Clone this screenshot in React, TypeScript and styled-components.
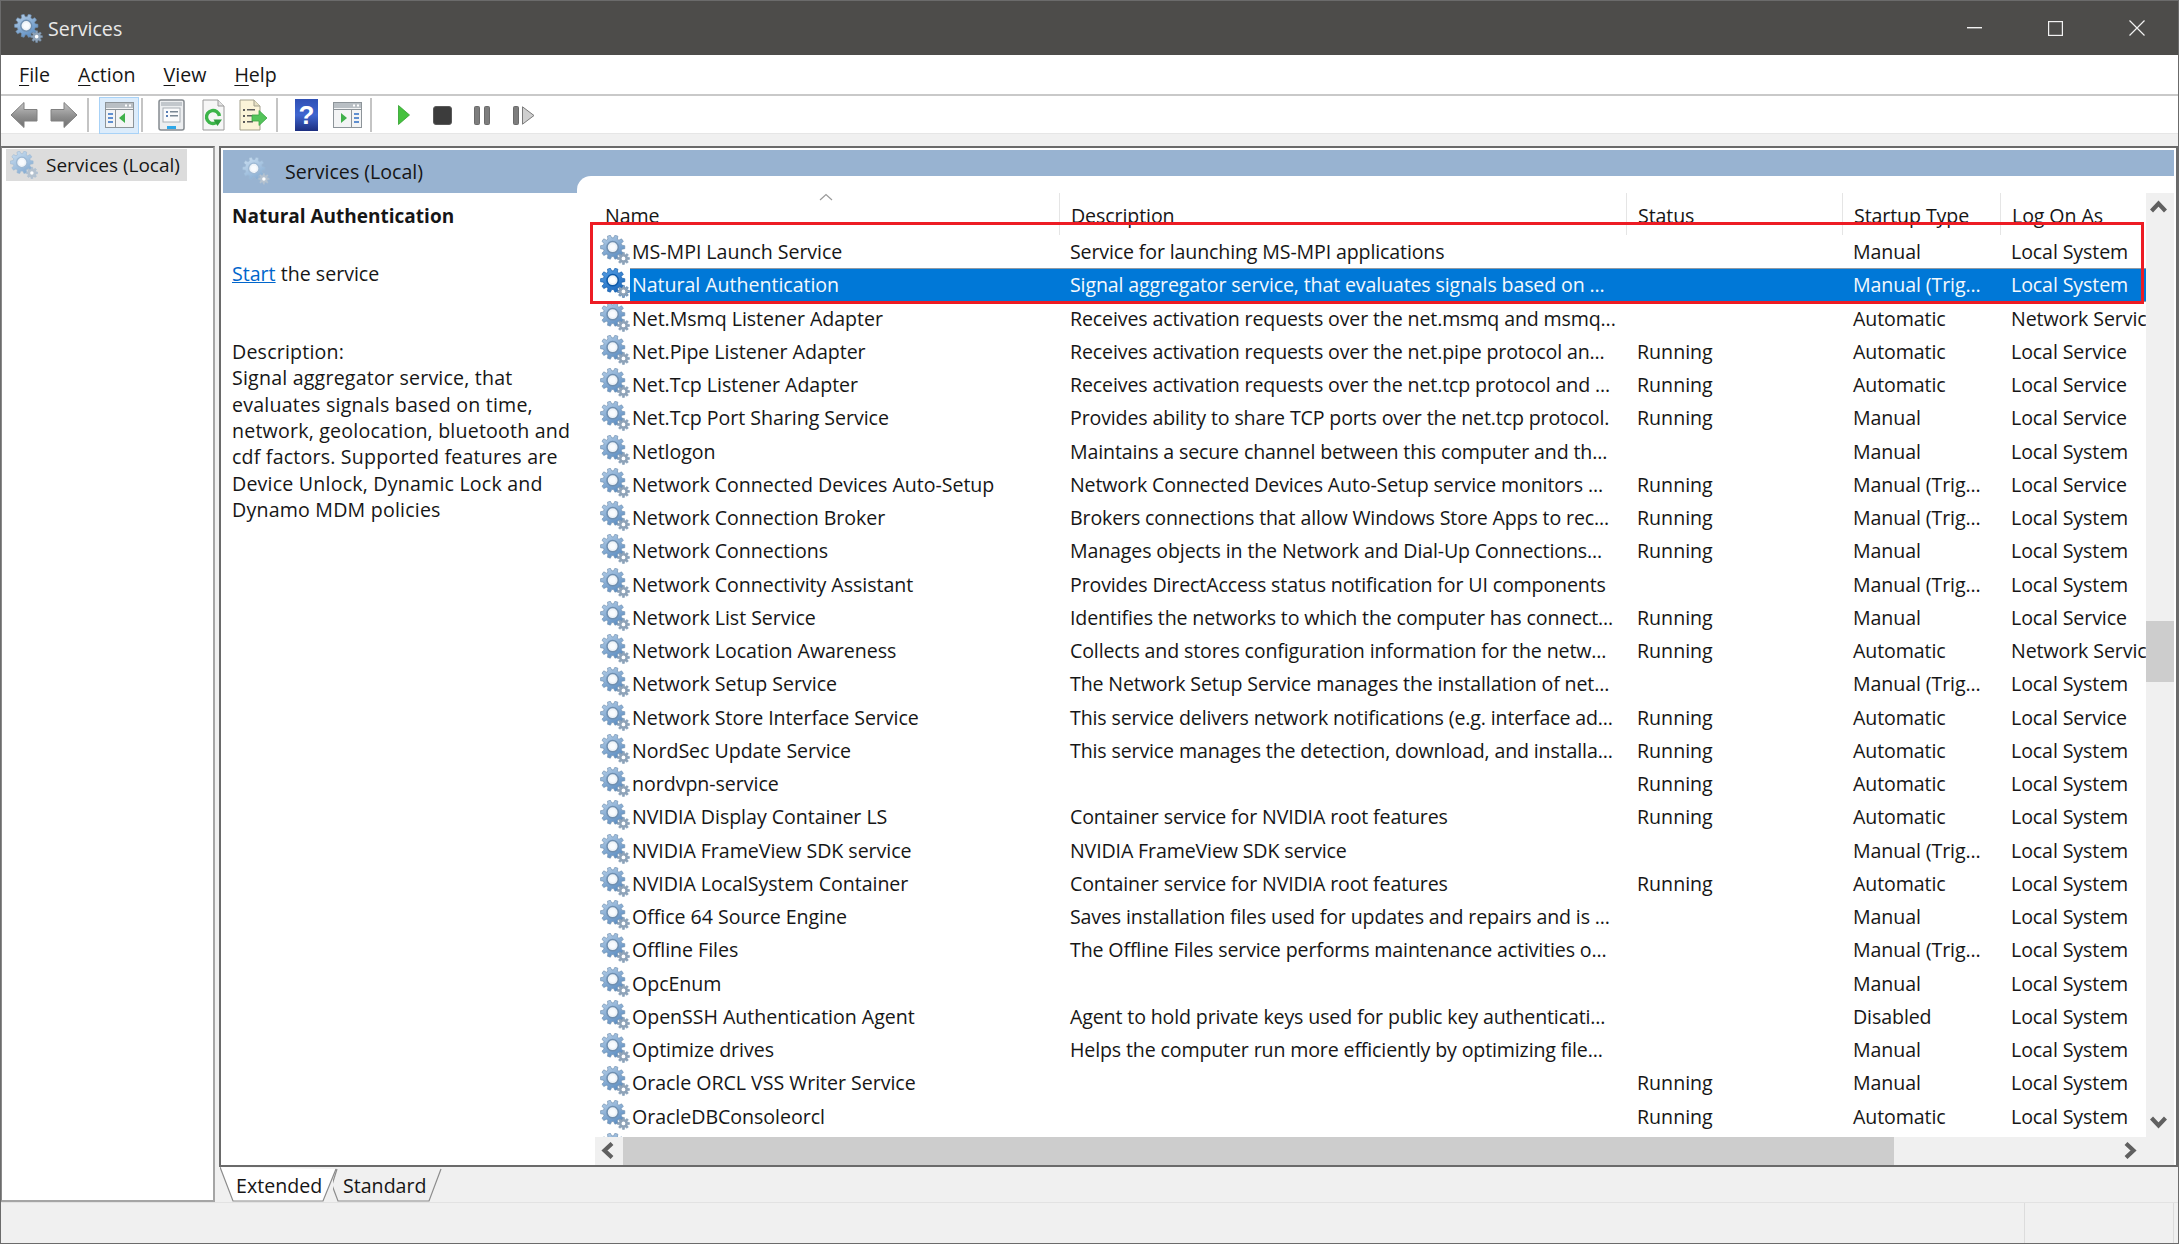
import React from "react";
import styled, { createGlobalStyle } from "styled-components";

type Service = {
  name: string;
  description?: string;
  status?: string;
  startup: string;
  logOn: string;
  selected?: boolean;
};

const services: Service[] = [
  { name: "MS-MPI Launch Service", description: "Service for launching MS-MPI applications", startup: "Manual", logOn: "Local System" },
  { name: "Natural Authentication", description: "Signal aggregator service, that evaluates signals based on ...", startup: "Manual (Trig...", logOn: "Local System", selected: true },
  { name: "Net.Msmq Listener Adapter", description: "Receives activation requests over the net.msmq and msmq...", startup: "Automatic", logOn: "Network Service" },
  { name: "Net.Pipe Listener Adapter", description: "Receives activation requests over the net.pipe protocol an...", status: "Running", startup: "Automatic", logOn: "Local Service" },
  { name: "Net.Tcp Listener Adapter", description: "Receives activation requests over the net.tcp protocol and ...", status: "Running", startup: "Automatic", logOn: "Local Service" },
  { name: "Net.Tcp Port Sharing Service", description: "Provides ability to share TCP ports over the net.tcp protocol.", status: "Running", startup: "Manual", logOn: "Local Service" },
  { name: "Netlogon", description: "Maintains a secure channel between this computer and th...", startup: "Manual", logOn: "Local System" },
  { name: "Network Connected Devices Auto-Setup", description: "Network Connected Devices Auto-Setup service monitors ...", status: "Running", startup: "Manual (Trig...", logOn: "Local Service" },
  { name: "Network Connection Broker", description: "Brokers connections that allow Windows Store Apps to rec...", status: "Running", startup: "Manual (Trig...", logOn: "Local System" },
  { name: "Network Connections", description: "Manages objects in the Network and Dial-Up Connections...", status: "Running", startup: "Manual", logOn: "Local System" },
  { name: "Network Connectivity Assistant", description: "Provides DirectAccess status notification for UI components", startup: "Manual (Trig...", logOn: "Local System" },
  { name: "Network List Service", description: "Identifies the networks to which the computer has connect...", status: "Running", startup: "Manual", logOn: "Local Service" },
  { name: "Network Location Awareness", description: "Collects and stores configuration information for the netw...", status: "Running", startup: "Automatic", logOn: "Network Service" },
  { name: "Network Setup Service", description: "The Network Setup Service manages the installation of net...", startup: "Manual (Trig...", logOn: "Local System" },
  { name: "Network Store Interface Service", description: "This service delivers network notifications (e.g. interface ad...", status: "Running", startup: "Automatic", logOn: "Local Service" },
  { name: "NordSec Update Service", description: "This service manages the detection, download, and installa...", status: "Running", startup: "Automatic", logOn: "Local System" },
  { name: "nordvpn-service", status: "Running", startup: "Automatic", logOn: "Local System" },
  { name: "NVIDIA Display Container LS", description: "Container service for NVIDIA root features", status: "Running", startup: "Automatic", logOn: "Local System" },
  { name: "NVIDIA FrameView SDK service", description: "NVIDIA FrameView SDK service", startup: "Manual (Trig...", logOn: "Local System" },
  { name: "NVIDIA LocalSystem Container", description: "Container service for NVIDIA root features", status: "Running", startup: "Automatic", logOn: "Local System" },
  { name: "Office 64 Source Engine", description: "Saves installation files used for updates and repairs and is ...", startup: "Manual", logOn: "Local System" },
  { name: "Offline Files", description: "The Offline Files service performs maintenance activities o...", startup: "Manual (Trig...", logOn: "Local System" },
  { name: "OpcEnum", startup: "Manual", logOn: "Local System" },
  { name: "OpenSSH Authentication Agent", description: "Agent to hold private keys used for public key authenticati...", startup: "Disabled", logOn: "Local System" },
  { name: "Optimize drives", description: "Helps the computer run more efficiently by optimizing file...", startup: "Manual", logOn: "Local System" },
  { name: "Oracle ORCL VSS Writer Service", status: "Running", startup: "Manual", logOn: "Local System" },
  { name: "OracleDBConsoleorcl", status: "Running", startup: "Automatic", logOn: "Local System" },
  // only the top of this row's icon shows above the scrollbar
  { name: "", startup: "", logOn: "" },
];

const gearPath = (cx: number, cy: number, outer: number, inner: number, teeth: number) => {
  const step = (Math.PI * 2) / teeth;
  const points: string[] = [];
  for (let i = 0; i < teeth; i++) {
    const a = i * step;
    const pairs: [number, number][] = [
      [inner, a - step * 0.34],
      [outer, a - step * 0.2],
      [outer, a + step * 0.2],
      [inner, a + step * 0.34],
    ];
    pairs.forEach(([r, t]) => {
      points.push(`${(cx + r * Math.cos(t)).toFixed(2)} ${(cy + r * Math.sin(t)).toFixed(2)}`);
    });
  }
  return `M${points.join("L")}Z`;
};

const bigGear = gearPath(13.5, 13, 13, 10, 10);
const smallGear = gearPath(25, 25, 6.5, 4.6, 8);

const GearIcon = ({ size = 30, tone = "normal" }: { size?: number; tone?: "normal" | "strong" | "pale" }) => {
  const id = `gear-${tone}`;
  const top = tone === "strong" ? "#5aa2e6" : tone === "pale" ? "#cfe2f3" : "#bcd3ea";
  const bottom = tone === "strong" ? "#1f6cc0" : tone === "pale" ? "#89aed3" : "#5f8fc2";
  const rim = tone === "strong" ? "#0f5aa8" : tone === "pale" ? "#9db8d3" : "#6f8fb0";
  return (
    <svg width={size} height={size} viewBox="0 0 32 32">
      <defs>
        <linearGradient id={id} x1="0" y1="0" x2="0.6" y2="1">
          <stop offset="0" stopColor={top} />
          <stop offset="1" stopColor={bottom} />
        </linearGradient>
      </defs>
      <path d={bigGear} fill={`url(#${id})`} stroke={rim} strokeWidth="0.7" />
      <circle cx="13.5" cy="13" r="6" fill="#eef3f8" stroke={rim} strokeWidth="1.6" />
      <circle cx="13.5" cy="13" r="3.2" fill={tone === "strong" ? "#fff" : "#f8fbfe"} />
      <path d={smallGear} fill={tone === "pale" ? "#b5c2cf" : "#8fa3b8"} stroke={rim} strokeWidth="0.5" />
      <circle cx="25" cy="25" r="2" fill="#fff" />
    </svg>
  );
};

const BackArrow = ({ flip }: { flip?: boolean }) => (
  <svg width="28" height="28" viewBox="0 0 28 28" style={flip ? { transform: "scaleX(-1)" } : undefined}>
    <defs>
      <linearGradient id="nav-arrow" x1="0" y1="0" x2="0" y2="1">
        <stop offset="0" stopColor="#c4c4c4" />
        <stop offset="0.55" stopColor="#8f8f8f" />
        <stop offset="1" stopColor="#6e6e6e" />
      </linearGradient>
    </defs>
    <path d="M1 14 L14 1.5 V8.5 H27 V20 H14 V26.5 Z" fill="url(#nav-arrow)" stroke="#808080" strokeWidth="1" strokeLinejoin="round" />
  </svg>
);

const PaneWindowIcon = ({ side }: { side: "left" | "right" }) => (
  <svg width="29" height="26" viewBox="0 0 29 26">
    <rect x="0.5" y="0.5" width="28" height="25" fill="#f3f4f5" stroke="#8d9499" />
    <rect x="1" y="1" width="27" height="5" fill="#b9bfc4" />
    <rect x="20" y="2.5" width="2" height="2" fill="#fff" />
    <rect x="24" y="2.5" width="2" height="2" fill="#fff" />
    <rect x="1" y="7" width="27" height="1" fill="#8d9499" />
    {side === "left" ? (
      <>
        <rect x="10" y="8" width="1" height="17" fill="#8d9499" />
        <rect x="3" y="11" width="5" height="2" fill="#5f8fd0" />
        <rect x="3" y="15" width="5" height="2" fill="#5f8fd0" />
        <rect x="3" y="19" width="5" height="2" fill="#5f8fd0" />
        <path d="M20 11 L14 16 L20 21 Z" fill="#3fb04a" />
      </>
    ) : (
      <>
        <rect x="18" y="8" width="1" height="17" fill="#8d9499" />
        <rect x="21" y="11" width="5" height="2" fill="#5f8fd0" />
        <rect x="21" y="15" width="5" height="2" fill="#5f8fd0" />
        <rect x="21" y="19" width="5" height="2" fill="#5f8fd0" />
        <path d="M8 11 L14 16 L8 21 Z" fill="#3fb04a" />
      </>
    )}
  </svg>
);

const PropertiesIcon = () => (
  <svg width="27" height="32" viewBox="0 0 27 32">
    <rect x="1" y="1" width="25" height="30" rx="2" fill="#eceef0" stroke="#858b90" strokeWidth="1.5" />
    <rect x="3" y="3" width="21" height="4" fill="#c2c7cc" />
    <rect x="5" y="9" width="17" height="14" fill="#fbfbfc" stroke="#a8aeb4" />
    <rect x="8" y="12" width="2" height="2" fill="#5b7fb5" />
    <rect x="8" y="16" width="2" height="2" fill="#5b7fb5" />
    <rect x="12" y="12" width="8" height="1.5" fill="#7a8794" />
    <rect x="12" y="16" width="8" height="1.5" fill="#7a8794" />
    <rect x="9" y="27" width="9" height="3" fill="#2ea7e8" />
  </svg>
);

const RefreshIcon = () => (
  <svg width="23" height="32" viewBox="0 0 23 32">
    <path d="M1 1 H16 L22 7 V31 H1 Z" fill="#f6f6f6" stroke="#9a9a9a" />
    <path d="M16 1 V7 H22" fill="#e2e2e2" stroke="#9a9a9a" />
    <circle cx="11" cy="18" r="6.5" fill="none" stroke="#3db54a" strokeWidth="3.4" strokeDasharray="35 6" transform="rotate(35 11 18)" />
    <path d="M11.5 20.5 L20 20.5 L15.5 27 Z" fill="#2e9e3c" />
  </svg>
);

const ExportIcon = () => (
  <svg width="28" height="32" viewBox="0 0 28 32">
    <path d="M1 1 H15 L21 7 V31 H1 Z" fill="#fbf4d8" stroke="#a3a08d" />
    <path d="M15 1 V7 H21" fill="#e6e0c4" stroke="#a3a08d" />
    <g fill="#5a5a5a">
      <rect x="4" y="10" width="2" height="2" />
      <rect x="4" y="16" width="2" height="2" />
      <rect x="4" y="22" width="2" height="2" />
      <rect x="8" y="10" width="8" height="1.5" />
      <rect x="8" y="16" width="6" height="1.5" />
      <rect x="8" y="22" width="6" height="1.5" />
    </g>
    <path d="M13 16 H20 V11.5 L28 19 L20 26.5 V22 H13 Z" fill="#54c45a" stroke="#3ba544" strokeWidth="0.8" />
  </svg>
);

const HelpIcon = () => (
  <svg width="23" height="32" viewBox="0 0 23 32">
    <defs>
      <linearGradient id="help-fill" x1="0" y1="0" x2="0" y2="1">
        <stop offset="0" stopColor="#2f4fb5" />
        <stop offset="0.5" stopColor="#3f66d0" />
        <stop offset="1" stopColor="#1d2f80" />
      </linearGradient>
    </defs>
    <rect x="0" y="0" width="23" height="32" fill="url(#help-fill)" />
    <text x="11.5" y="25" fontSize="26" fontWeight="700" fontFamily="'Liberation Sans', sans-serif" fill="#fff" textAnchor="middle">?</text>
  </svg>
);

const PlayIcon = () => (
  <svg width="12" height="20" viewBox="0 0 12 20">
    <path d="M0.5 0.5 L11.5 10 L0.5 19.5 Z" fill="#45c13e" stroke="#2f9e2c" strokeWidth="0.8" strokeLinejoin="round" />
  </svg>
);

const StopIcon = () => (
  <svg width="19" height="19" viewBox="0 0 19 19">
    <rect x="0.5" y="0.5" width="18" height="18" rx="2.5" fill="#3c3c3c" stroke="#5a5a5a" />
  </svg>
);

const PauseIcon = () => (
  <svg width="16" height="19" viewBox="0 0 16 19">
    <rect x="0.5" y="0.5" width="5" height="18" rx="1" fill="#7d7d7d" stroke="#6a6a6a" />
    <rect x="10.5" y="0.5" width="5" height="18" rx="1" fill="#7d7d7d" stroke="#6a6a6a" />
  </svg>
);

const StepIcon = () => (
  <svg width="22" height="19" viewBox="0 0 22 19">
    <rect x="0.5" y="0.5" width="5" height="18" rx="1" fill="#7d7d7d" stroke="#6a6a6a" />
    <path d="M9.5 0.8 L21 9.5 L9.5 18.2 Z" fill="#cfcfcf" stroke="#7a7a7a" strokeLinejoin="round" />
  </svg>
);

const Chevron = ({ direction }: { direction: "up" | "down" | "left" | "right" }) => {
  const angle = { up: 0, right: 90, down: 180, left: 270 }[direction];
  return (
    <svg width="17" height="17" viewBox="0 0 17 17" style={{ transform: `rotate(${angle}deg)` }}>
      <path d="M1.5 13 L8.5 5.5 L15.5 13" fill="none" stroke="#606060" strokeWidth="4.2" />
    </svg>
  );
};

const GlobalStyle = createGlobalStyle`
  html, body {
    margin: 0;
    padding: 0;
    height: 100%;
    background: #f0f0f0;
  }
  #root {
    height: 100%;
  }
`;

const Window = styled.div`
  width: 2179px;
  height: 1244px;
  box-sizing: border-box;
  border: 1px solid #6b6b6b;
  display: flex;
  flex-direction: column;
  overflow: hidden;
  background: #f0f0f0;
  color: #161616;
  font-family: "Open Sans", "Noto Sans", sans-serif;
  font-size: 19.6px;
`;

const TitleBar = styled.div`
  height: 54px;
  flex: none;
  background: #4d4c4a;
  display: flex;
  align-items: center;
  padding-left: 13px;
  color: #e8e8e8;
`;

const TitleText = styled.span`
  margin-left: 5px;
  flex: 1;
`;

const WindowControl = styled.span<{ $right: number }>`
  display: flex;
  margin-right: ${(p) => p.$right}px;
`;

const MenuBar = styled.div`
  height: 39px;
  flex: none;
  background: #fff;
  border-bottom: 2px solid #c9c9c9;
  display: flex;
  align-items: center;
  gap: 28px;
  padding-left: 18px;
  box-sizing: content-box;
`;

const MenuItem = styled.span`
  u {
    text-underline-offset: 3px;
  }
`;

const ToolBar = styled.div`
  height: 38px;
  flex: none;
  background: #fff;
  border-bottom: 1px solid #e6e6e6;
  display: flex;
  align-items: center;
  padding-top: 1px;
  box-sizing: border-box;
`;

const ToolSlot = styled.span<{ $left: number }>`
  display: flex;
  align-items: center;
  margin-left: ${(p) => p.$left}px;
`;

const ToolSeparator = styled.span<{ $left: number }>`
  width: 2px;
  height: 34px;
  background: #c4c4c4;
  margin-left: ${(p) => p.$left}px;
`;

const ActiveToolButton = styled.span`
  width: 40px;
  height: 37px;
  box-sizing: border-box;
  margin-left: 10px;
  display: flex;
  align-items: center;
  justify-content: center;
  background: #dcecfb;
  border: 1px solid #a8d2f7;
`;

const Workspace = styled.div`
  flex: 1;
  min-height: 0;
  display: flex;
  gap: 4px;
  padding-top: 12px;
`;

const TreePane = styled.div`
  width: 214px;
  box-sizing: border-box;
  background: #fff;
  border-top: 2px solid #6f6f6f;
  border-right: 2px solid #a5a5a5;
  border-bottom: 2px solid #a5a5a5;
  border-left: 1px solid #8a8a8a;
  padding: 1px 26px 0 4px;
`;

const TreeItem = styled.div`
  height: 32px;
  width: 181px;
  display: flex;
  align-items: center;
  gap: 8px;
  padding-left: 4px;
  box-sizing: border-box;
  background: #dcdcdc;
  white-space: nowrap;
  font-size: 19px;
`;

const MainColumn = styled.div`
  flex: 1;
  min-width: 0;
  display: flex;
  flex-direction: column;
`;

const DetailsPane = styled.div`
  flex: 1;
  min-height: 0;
  box-sizing: border-box;
  border: 2px solid #6a6a6a;
  padding: 2px 2px 0;
  background: #fff;
  display: flex;
  flex-direction: column;
`;

const Band = styled.div`
  height: 43px;
  flex: none;
  background: #98b3d1;
  display: flex;
`;

const BandTitle = styled.div`
  width: 354px;
  flex: none;
  display: flex;
  align-items: center;
  padding: 0 0 1px 19px;
  box-sizing: border-box;
  gap: 15px;
`;

const BandNotch = styled.div`
  flex: 1;
  height: 17px;
  align-self: flex-end;
  background: #fff;
  border-top-left-radius: 14px;
`;

const PaneBody = styled.div`
  flex: 1;
  min-height: 0;
  display: flex;
`;

const DescriptionPanel = styled.div`
  width: 372px;
  flex: none;
  box-sizing: border-box;
  padding: 10px 0 0 9px;
  line-height: 26.4px;
`;

const ServiceHeading = styled.div`
  font-weight: 700;
  font-size: 19px;
`;

const StartLine = styled.div`
  margin-top: 32px;
  a {
    color: #0066cc;
    text-decoration: underline;
  }
`;

const DescriptionText = styled.div`
  margin-top: 51px;
  letter-spacing: 0.2px;
`;

const ListPanel = styled.div`
  flex: 1;
  min-width: 0;
  display: flex;
  flex-direction: column;
`;

const ListBody = styled.div`
  flex: 1;
  min-height: 0;
  display: flex;
`;

const ListColumn = styled.div`
  flex: 1;
  min-width: 0;
  display: flex;
  flex-direction: column;
  overflow: hidden;
`;

const columns = "464px 567px 216px 158px 146px";

const HeaderRow = styled.div`
  height: 42px;
  flex: none;
  display: grid;
  grid-template-columns: ${columns};
  letter-spacing: -0.1px;
`;

const HeaderCell = styled.div<{ $first?: boolean }>`
  position: relative;
  padding: 9px 0 0 ${(p) => (p.$first ? 10 : 11)}px;
  white-space: nowrap;
  border-left: ${(p) => (p.$first ? "none" : "1px solid #e5e5e5")};
  box-sizing: border-box;
`;

const SortCaret = styled.svg`
  position: absolute;
  top: 0;
  left: 224px;
`;

const RowsViewport = styled.div`
  flex: 1;
  min-height: 0;
  overflow: hidden;
`;

const Row = styled.div`
  height: 33.25px;
  display: grid;
  grid-template-columns: ${columns};
`;

const NameCell = styled.div`
  display: flex;
  padding-left: 5px;
  min-width: 0;
`;

const IconSlot = styled.span`
  width: 30px;
  height: 30px;
  flex: none;
  display: flex;
  margin-top: 0;
`;

const Cell = styled.div<{ $selected?: boolean; $indent?: number; $spacing?: number }>`
  flex: 1;
  min-width: 0;
  display: flex;
  align-items: center;
  overflow: hidden;
  white-space: nowrap;
  box-sizing: border-box;
  padding-left: ${(p) => p.$indent ?? 11}px;
  letter-spacing: ${(p) => p.$spacing ?? 0}px;
  background: ${(p) => (p.$selected ? "#0078d7" : "transparent")};
  color: ${(p) => (p.$selected ? "#f4f9fd" : "inherit")};
  border-top: 1px solid ${(p) => (p.$selected ? "#8f9aa5" : "transparent")};
  border-bottom: 1px solid ${(p) => (p.$selected ? "#8f9aa5" : "transparent")};
`;

const VScroll = styled.div`
  width: 28px;
  flex: none;
  background: #f0f0f0;
  display: flex;
  flex-direction: column;
`;

const ScrollButton = styled.div`
  width: 28px;
  height: 28px;
  flex: none;
  box-sizing: border-box;
  padding: 0 3px 2px 0;
  display: flex;
  align-items: center;
  justify-content: center;
`;

const VTrack = styled.div`
  flex: 1;
  min-height: 0;
`;

const VThumb = styled.div`
  height: 61px;
  margin-top: 400px;
  background: #cdcdcd;
`;

const HScroll = styled.div`
  height: 28px;
  flex: none;
  background: #f0f0f0;
  display: flex;
  padding-right: 28px;
`;

const HThumb = styled.div`
  width: 1271px;
  background: #cdcdcd;
  margin-right: auto;
`;

const ViewTabs = styled.div`
  height: 35px;
  flex: none;
  display: flex;
  padding-left: 1px;
`;

const ViewTab = styled.div<{ $width: number; $indent: number }>`
  position: relative;
  width: ${(p) => p.$width}px;
  padding-left: ${(p) => p.$indent}px;
  box-sizing: border-box;
  line-height: 38px;
  svg {
    position: absolute;
    top: 0;
    left: 0;
  }
  span {
    position: relative;
  }
`;

const StatusBar = styled.div`
  height: 40px;
  flex: none;
  background: #f0f0f0;
  border-top: 1px solid #e2e2e2;
  display: grid;
  grid-template-columns: 1fr 149px 4px;
`;

const StatusSection = styled.div`
  border-right: 1px solid #dcdcdc;
`;

const RedHighlight = styled.div`
  position: absolute;
  left: 590px;
  top: 222px;
  width: 1554px;
  height: 82px;
  box-sizing: border-box;
  border: 3px solid #ed1c24;
  pointer-events: none;
`;

const Page = styled.div`
  position: relative;
  width: 2179px;
  height: 1244px;
`;

export default function App() {
  return (
    <Page>
      <GlobalStyle />
      <Window>
        <TitleBar>
          <GearIcon size={29} />
          <TitleText>Services</TitleText>
          <WindowControl $right={66}>
            <svg width="15" height="2" viewBox="0 0 15 2">
              <rect width="15" height="1.4" fill="#f2f2f2" />
            </svg>
          </WindowControl>
          <WindowControl $right={66}>
            <svg width="15" height="15" viewBox="0 0 15 15">
              <rect x="0.6" y="0.6" width="13.8" height="13.8" fill="none" stroke="#f2f2f2" strokeWidth="1.2" />
            </svg>
          </WindowControl>
          <WindowControl $right={33}>
            <svg width="16" height="16" viewBox="0 0 16 16">
              <path d="M0.5 0.5 L15.5 15.5 M15.5 0.5 L0.5 15.5" stroke="#f2f2f2" strokeWidth="1.2" />
            </svg>
          </WindowControl>
        </TitleBar>

        <MenuBar>
          <MenuItem><u>F</u>ile</MenuItem>
          <MenuItem><u>A</u>ction</MenuItem>
          <MenuItem><u>V</u>iew</MenuItem>
          <MenuItem><u>H</u>elp</MenuItem>
        </MenuBar>

        <ToolBar>
          <ToolSlot $left={9}><BackArrow /></ToolSlot>
          <ToolSlot $left={12}><BackArrow flip /></ToolSlot>
          <ToolSeparator $left={9} />
          <ActiveToolButton><PaneWindowIcon side="left" /></ActiveToolButton>
          <ToolSeparator $left={2} />
          <ToolSlot $left={15}><PropertiesIcon /></ToolSlot>
          <ToolSlot $left={17}><RefreshIcon /></ToolSlot>
          <ToolSlot $left={14}><ExportIcon /></ToolSlot>
          <ToolSeparator $left={9} />
          <ToolSlot $left={17}><HelpIcon /></ToolSlot>
          <ToolSlot $left={15}><PaneWindowIcon side="right" /></ToolSlot>
          <ToolSeparator $left={8} />
          <ToolSlot $left={26}><PlayIcon /></ToolSlot>
          <ToolSlot $left={23}><StopIcon /></ToolSlot>
          <ToolSlot $left={22}><PauseIcon /></ToolSlot>
          <ToolSlot $left={23}><StepIcon /></ToolSlot>
        </ToolBar>

        <Workspace>
          <TreePane>
            <TreeItem>
              <GearIcon size={28} tone="pale" />
              <span>Services (Local)</span>
            </TreeItem>
          </TreePane>

          <MainColumn>
            <DetailsPane>
              <Band>
                <BandTitle>
                  <GearIcon size={28} tone="pale" />
                  <span>Services (Local)</span>
                </BandTitle>
                <BandNotch />
              </Band>
              <PaneBody>
                <DescriptionPanel>
                  <ServiceHeading>Natural Authentication</ServiceHeading>
                  <StartLine>
                    <a href="#start">Start</a> the service
                  </StartLine>
                  <DescriptionText>
                    Description:
                    <br />
                    Signal aggregator service, that
                    <br />
                    evaluates signals based on time,
                    <br />
                    network, geolocation, bluetooth and
                    <br />
                    cdf factors. Supported features are
                    <br />
                    Device Unlock, Dynamic Lock and
                    <br />
                    Dynamo MDM policies
                  </DescriptionText>
                </DescriptionPanel>

                <ListPanel>
                  <ListBody>
                    <ListColumn>
                      <HeaderRow>
                        <HeaderCell $first>
                          Name
                          <SortCaret width="14" height="8" viewBox="0 0 14 8">
                            <path d="M1 7 L7 1.5 L13 7" fill="none" stroke="#9a9a9a" strokeWidth="1.2" />
                          </SortCaret>
                        </HeaderCell>
                        <HeaderCell>Description</HeaderCell>
                        <HeaderCell>Status</HeaderCell>
                        <HeaderCell>Startup Type</HeaderCell>
                        <HeaderCell>Log On As</HeaderCell>
                      </HeaderRow>
                      <RowsViewport>
                        {services.map((service) => (
                          <Row key={service.name}>
                            <NameCell>
                              <IconSlot>
                                <GearIcon tone={service.selected ? "strong" : "normal"} />
                              </IconSlot>
                              <Cell $selected={service.selected} $indent={2} $spacing={-0.04}>{service.name}</Cell>
                            </NameCell>
                            <Cell $selected={service.selected} $spacing={-0.14}>{service.description}</Cell>
                            <Cell $selected={service.selected}>{service.status}</Cell>
                            <Cell $selected={service.selected} $spacing={-0.1}>{service.startup}</Cell>
                            <Cell $selected={service.selected} $spacing={-0.1}>{service.logOn}</Cell>
                          </Row>
                        ))}
                      </RowsViewport>
                    </ListColumn>
                    <VScroll>
                      <ScrollButton><Chevron direction="up" /></ScrollButton>
                      <VTrack><VThumb /></VTrack>
                      <ScrollButton><Chevron direction="down" /></ScrollButton>
                    </VScroll>
                  </ListBody>
                  <HScroll>
                    <ScrollButton><Chevron direction="left" /></ScrollButton>
                    <HThumb />
                    <ScrollButton><Chevron direction="right" /></ScrollButton>
                  </HScroll>
                </ListPanel>
              </PaneBody>
            </DetailsPane>

            <ViewTabs>
              <ViewTab $width={113} $indent={16}>
                <svg width="118" height="35" viewBox="0 0 118 35">
                  <path d="M0 0 L13 34 H103 L116 2" fill="#fff" stroke="#8c8c8c" strokeWidth="1.2" />
                </svg>
                <span>Extended</span>
              </ViewTab>
              <ViewTab $width={110} $indent={10}>
                <svg width="110" height="35" viewBox="0 0 110 35">
                  <path d="M4 2 L-1 18 L5 34 H96 L108 2" fill="none" stroke="#8c8c8c" strokeWidth="1.2" />
                </svg>
                <span>Standard</span>
              </ViewTab>
            </ViewTabs>
          </MainColumn>
        </Workspace>

        <StatusBar>
          <StatusSection />
          <StatusSection />
          <div />
        </StatusBar>
      </Window>
      <RedHighlight />
    </Page>
  );
}
